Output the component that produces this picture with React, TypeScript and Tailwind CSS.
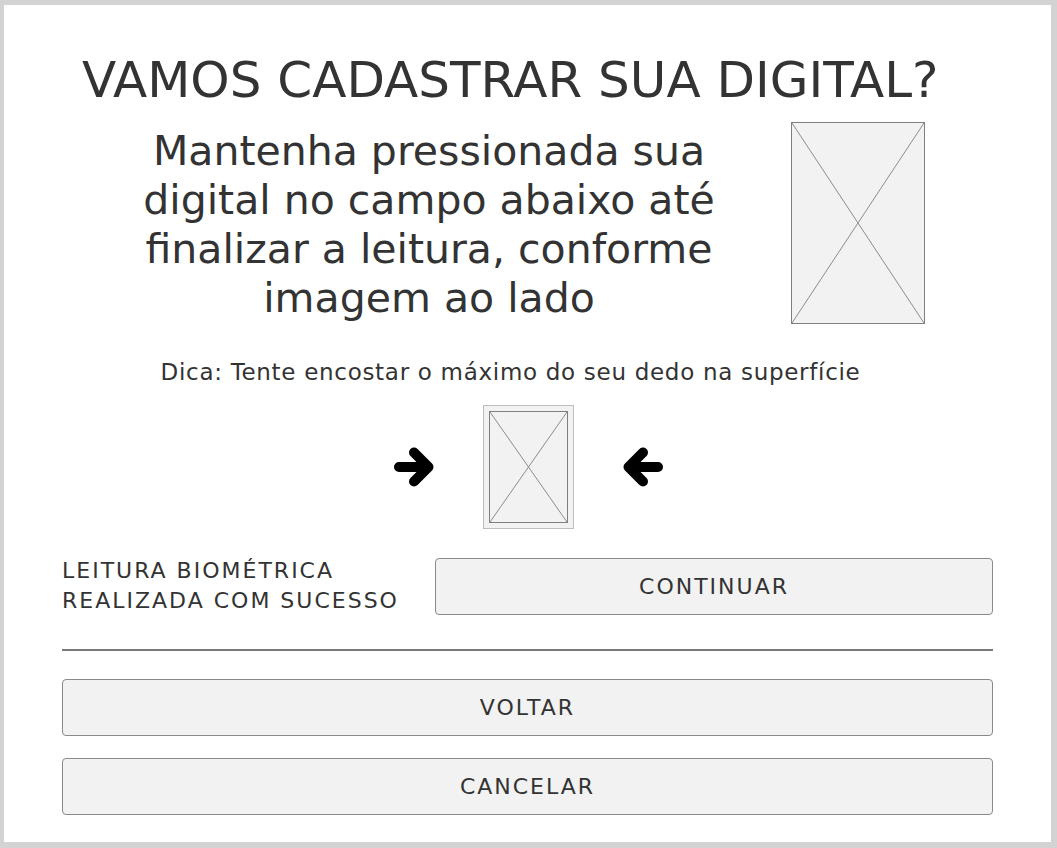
import React from "react";

function Placeholder({ className }: { className?: string }) {
  return (
    <div className={"relative bg-[#f2f2f2] border border-[#7f7f7f] " + (className ?? "")}>
      <svg className="absolute inset-0 w-full h-full" preserveAspectRatio="none" viewBox="0 0 100 100">
        <line x1="0" y1="0" x2="100" y2="100" stroke="#8c8c8c" strokeWidth="1" vectorEffect="non-scaling-stroke" />
        <line x1="100" y1="0" x2="0" y2="100" stroke="#8c8c8c" strokeWidth="1" vectorEffect="non-scaling-stroke" />
      </svg>
    </div>
  );
}

function Arrow({ dir }: { dir: "right" | "left" }) {
  return (
    <svg width="42" height="42" viewBox="0 0 42 42" className={dir === "left" ? "-scale-x-100" : ""}>
      <path
        d="M6 21 L34 21 M21 6.5 L35.5 21 L21 35.5"
        fill="none"
        stroke="#000"
        strokeWidth="10"
        strokeLinecap="round"
        strokeLinejoin="round"
      />
    </svg>
  );
}

const btn =
  "h-[57px] rounded-[4px] border border-[#8a8a8a] bg-[#f2f2f2] text-[22px] tracking-[2px] text-[#333]";

export default function App() {
  return (
    <div
      className="w-[1057px] h-[848px] bg-white border-t-[5px] border-l-4 border-r-[6px] border-b-[6px] border-[#d3d3d3] text-[#333333] flex flex-col"
      style={{ fontFamily: "'DejaVu Sans', sans-serif" }}
    >
      <h1 className="mt-[44px] pl-[78px] text-[50px] leading-[62px] whitespace-nowrap">
        VAMOS CADASTRAR SUA DIGITAL?
      </h1>
      <div className="mt-[11px] flex items-center">
        <p className="ml-[125px] w-[600px] pt-[4px] text-center text-[41px] leading-[49px]">
          Mantenha pressionada sua digital no campo abaixo até finalizar a leitura, conforme imagem ao lado
        </p>
        <Placeholder className="ml-[62px] w-[134px] h-[202px]" />
      </div>
      <p className="mt-[33px] text-center text-[23px] tracking-[0.7px] leading-[30px] pr-[34px]">
        Dica: Tente encostar o máximo do seu dedo na superfície
      </p>
      <div className="mt-[18px] flex items-center justify-center pl-[2px]">
        <Arrow dir="right" />
        <div className="ml-[48px] mr-[48px] w-[91px] h-[124px] border border-[#bdbdbd] bg-[#f2f2f2] p-[5px]">
          <Placeholder className="w-full h-full" />
        </div>
        <Arrow dir="left" />
      </div>
      <div className="mt-[27px] flex items-center px-[58px]">
        <div className="w-[373px] text-[22px] tracking-[2px] leading-[30px] uppercase whitespace-nowrap">
          LEITURA BIOMÉTRICA
          <br />
          REALIZADA COM SUCESSO
        </div>
        <button className={"flex-1 " + btn}>CONTINUAR</button>
      </div>
      <div className="mx-[58px] mt-[33px] h-[2px] bg-[#7a7a7a]" />
      <div className="mx-[58px] mt-[28px] flex flex-col gap-[22px]">
        <button className={btn}>VOLTAR</button>
        <button className={btn}>CANCELAR</button>
      </div>
    </div>
  );
}
